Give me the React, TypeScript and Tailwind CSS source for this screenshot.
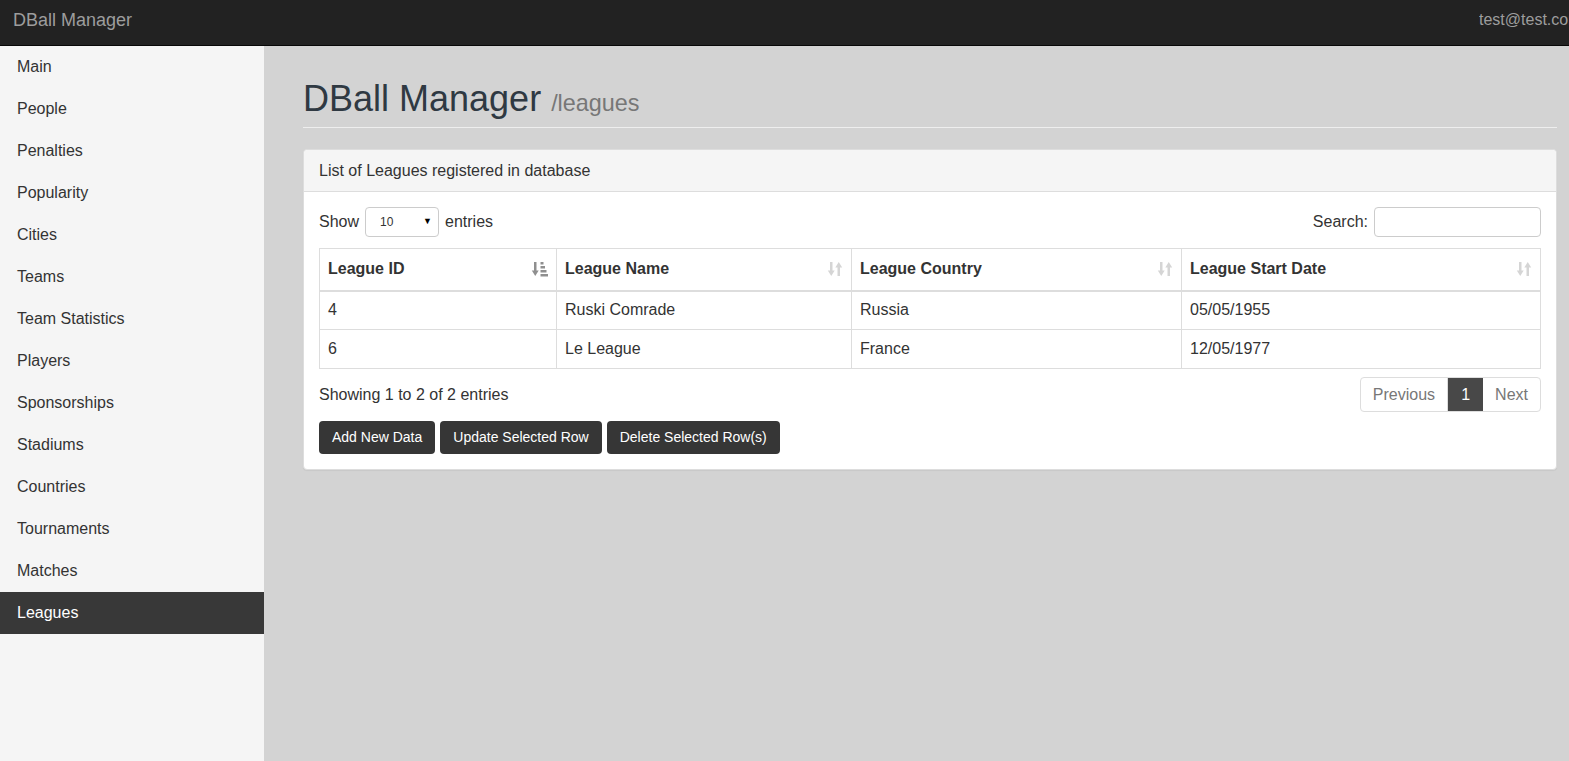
import React from "react";

const navItems = [
  "Main",
  "People",
  "Penalties",
  "Popularity",
  "Cities",
  "Teams",
  "Team Statistics",
  "Players",
  "Sponsorships",
  "Stadiums",
  "Countries",
  "Tournaments",
  "Matches",
  "Leagues",
];

const columns = [
  { label: "League ID", width: "w-[237px]", active: true },
  { label: "League Name", width: "w-[295px]", active: false },
  { label: "League Country", width: "w-[330px]", active: false },
  { label: "League Start Date", width: "", active: false },
];

const rows = [
  ["4", "Ruski Comrade", "Russia", "05/05/1955"],
  ["6", "Le League", "France", "12/05/1977"],
];

function SortBoth() {
  return (
    <svg width="16" height="16" viewBox="0 0 16 16" className="text-[#d5d5d5]" fill="currentColor">
      {/* down arrow */}
      <rect x="3" y="1" width="2.5" height="10" />
      <path d="M0.8 9.5 L7.7 9.5 L4.25 15 Z" />
      {/* up arrow */}
      <rect x="10.5" y="5" width="2.5" height="10" />
      <path d="M8.3 6.5 L15.2 6.5 L11.75 1 Z" />
    </svg>
  );
}

function SortDesc() {
  return (
    <svg width="17" height="16" viewBox="0 0 17 16" className="text-[#8f8f8f]" fill="currentColor">
      <rect x="3" y="1" width="2.5" height="10" />
      <path d="M0.8 9.5 L7.7 9.5 L4.25 15 Z" />
      <rect x="9.5" y="1" width="3" height="2.5" />
      <rect x="9.5" y="5" width="4.5" height="2.5" />
      <rect x="9.5" y="9" width="6" height="2.5" />
      <rect x="9.5" y="13" width="7.5" height="2.5" />
    </svg>
  );
}

export default function App() {
  return (
    <div className="min-h-[761px] flex flex-col bg-[#d3d3d3] text-[#333] font-['Liberation_Sans',Arial,sans-serif] text-[16px]">
      {/* top navbar */}
      <div className="h-[46px] bg-[#222] border-b border-[#080808] flex items-center shrink-0">
        <span className="pl-[13px] text-[18px] text-[#9d9d9d] leading-[20px] -mt-[6px]">DBall Manager</span>
        <div className="flex-1" />
        <div className="w-[90px] overflow-hidden whitespace-nowrap text-[#9d9d9d] leading-[20px] -mt-[6px]">test@test.com</div>
      </div>

      <div className="flex flex-1">
        {/* sidebar */}
        <div className="w-[264px] shrink-0 bg-[#f5f5f5]">
          {navItems.map((item) => (
            <div
              key={item}
              className={`h-[42px] px-[17px] flex items-center ${
                item === "Leagues" ? "bg-[#383838] text-white" : "text-[#333]"
              }`}
            >
              {item}
            </div>
          ))}
        </div>

        {/* main content */}
        <div className="flex-1 pl-[39px] pr-[12px]">
          <div className="mt-[33px] pb-[4px] border-b border-[#eee]">
            <h1 className="text-[36px] leading-[40px] text-[#2f3942]">
              DBall Manager <small className="text-[23.4px] text-[#777]">/leagues</small>
            </h1>
          </div>

          <div className="mt-[21px] bg-white border border-[#ddd] rounded-[4px] shadow-[0_1px_1px_rgba(0,0,0,0.05)]">
            <div className="px-[15px] h-[42px] flex items-center bg-[#f5f5f5] border-b border-[#ddd] rounded-t-[4px]">
              List of Leagues registered in database
            </div>

            <div className="p-[15px]">
              <div className="flex items-center justify-between h-[30px]">
                <div className="flex items-center">
                  <span>Show</span>
                  <div className="ml-[6px] mr-[6px] w-[74px] h-[30px] border border-[#ccc] rounded-[4px] flex items-center pl-[14px] pr-[6px] text-[12px]">
                    <span className="flex-1">10</span>
                    <span className="text-[9px] text-black">▼</span>
                  </div>
                  <span>entries</span>
                </div>
                <div className="flex items-center">
                  <span>Search:</span>
                  <div className="ml-[6px] w-[167px] h-[30px] border border-[#ccc] rounded-[4px]" />
                </div>
              </div>

              <table className="mt-[11px] w-full border-collapse border border-[#ddd]">
                <thead>
                  <tr className="h-[42px] border-b-2 border-[#ddd]">
                    {columns.map((c) => (
                      <th key={c.label} className={`${c.width} border border-[#ddd] px-[8px] text-left font-bold`}>
                        <div className="flex items-center justify-between">
                          <span>{c.label}</span>
                          {c.active ? <SortDesc /> : <SortBoth />}
                        </div>
                      </th>
                    ))}
                  </tr>
                </thead>
                <tbody>
                  {rows.map((r) => (
                    <tr key={r[0]} className="h-[39px]">
                      {r.map((cell, i) => (
                        <td key={i} className="border border-[#ddd] px-[8px]">
                          {cell}
                        </td>
                      ))}
                    </tr>
                  ))}
                </tbody>
              </table>

              <div className="mt-[8px] flex items-center justify-between">
                <span>Showing 1 to 2 of 2 entries</span>
                <div className="flex h-[35px] border border-[#ddd] rounded-[4px] overflow-hidden">
                  <span className="px-[12px] flex items-center text-[#777] border-r border-[#ddd]">Previous</span>
                  <span className="w-[35px] flex items-center justify-center bg-[#484848] text-white">1</span>
                  <span className="px-[12px] flex items-center text-[#777]">Next</span>
                </div>
              </div>

              <div className="mt-[9px] flex gap-[5px] text-[14px] text-white">
                <button className="h-[33px] px-[13px] bg-[#363636] rounded-[4px]">Add New Data</button>
                <button className="h-[33px] px-[13px] bg-[#363636] rounded-[4px]">Update Selected Row</button>
                <button className="h-[33px] px-[13px] bg-[#363636] rounded-[4px]">Delete Selected Row(s)</button>
              </div>
            </div>
          </div>
        </div>
      </div>
    </div>
  );
}
